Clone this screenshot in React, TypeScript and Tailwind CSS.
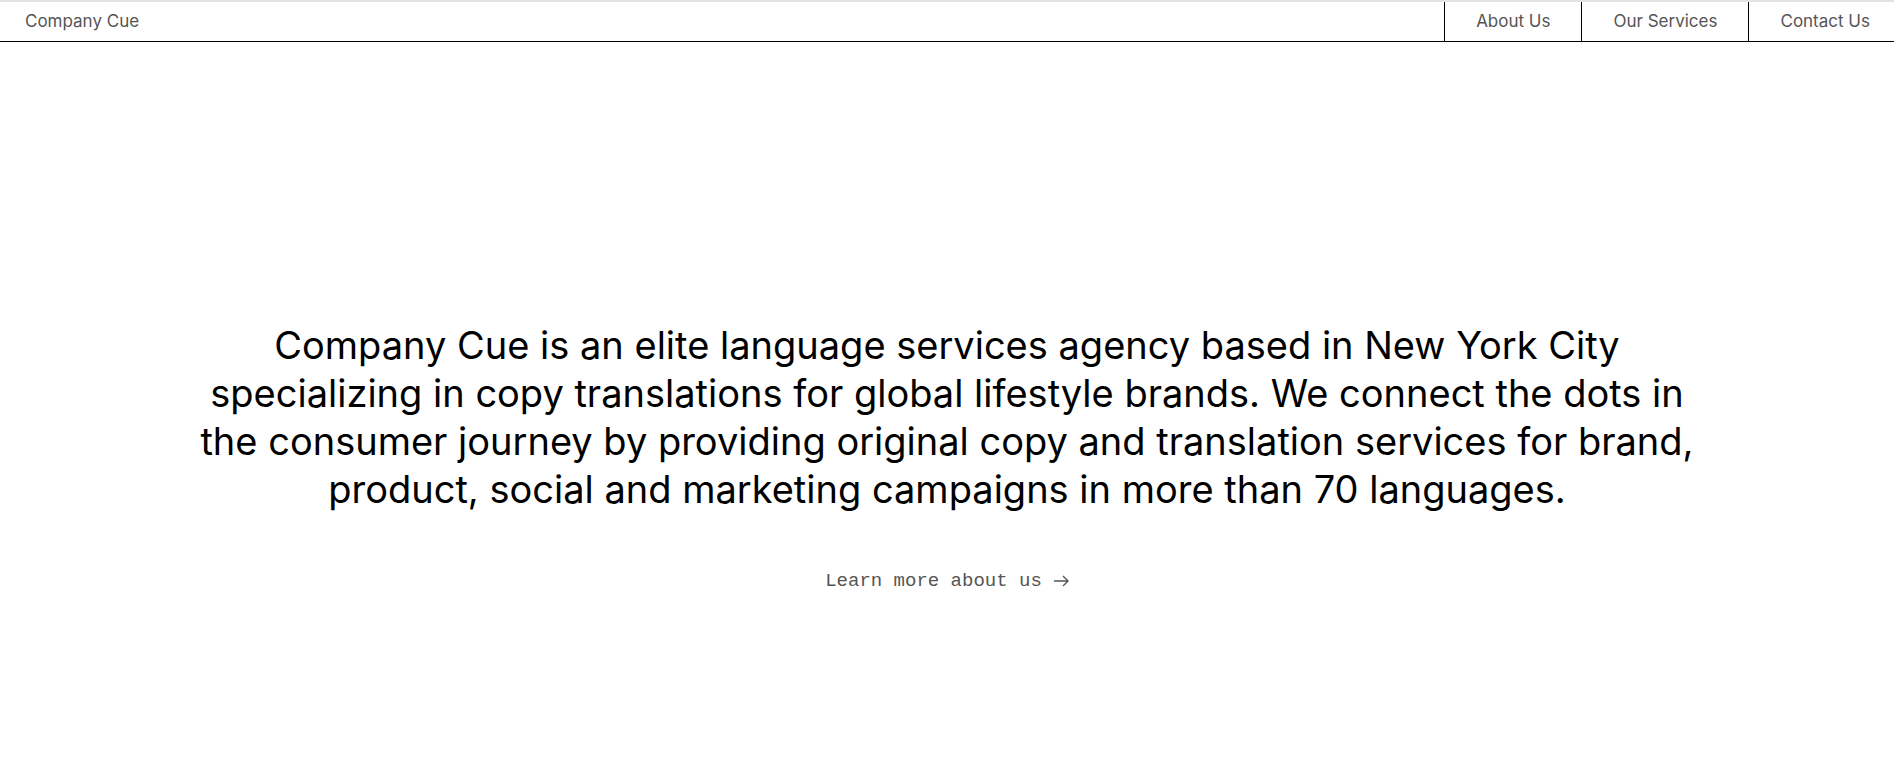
import React from "react";

export default function App() {
  const navItems = ["About Us", "Our Services", "Contact Us"];

  return (
    <div className="min-h-screen bg-white" style={{ fontFamily: "Inter, 'Noto Sans', sans-serif" }}>
      {/* top strip */}
      <div className="h-[2px] bg-[#e3e3e3]" />

      {/* Header */}
      <header className="flex h-[40px] items-stretch justify-between border-b border-black">
        <div className="flex items-center pl-[25px] text-[17px] text-[#555]">Company Cue</div>
        <nav className="flex items-stretch">
          {navItems.map((item) => (
            <a
              key={item}
              href="#"
              className="flex items-center border-l border-black px-[31px] text-[17px] text-[#555] last:pr-[24px]"
            >
              {item}
            </a>
          ))}
        </nav>
      </header>

      {/* Hero */}
      <main className="flex flex-col items-center pt-[279px]">
        <p className="max-w-[1540px] text-center text-[38px] leading-[48px] text-black">
          Company Cue is an elite language services agency based in New York City specializing in copy translations
          for global lifestyle brands. We connect the dots in the consumer journey by providing original copy and
          translation services for brand, product, social and marketing campaigns in more than 70 languages.
        </p>
        <a
          href="#"
          className="mt-[54px] flex items-center gap-[12px] text-[19px] text-[#555]"
          style={{ fontFamily: "'Liberation Mono', monospace" }}
        >
          <span>Learn more about us</span>
          <svg width="15" height="12" viewBox="0 0 15 12" fill="none" stroke="#555" strokeWidth="1.4">
            <path d="M0 6 H14 M9 1 L14 6 L9 11" />
          </svg>
        </a>
      </main>
    </div>
  );
}
